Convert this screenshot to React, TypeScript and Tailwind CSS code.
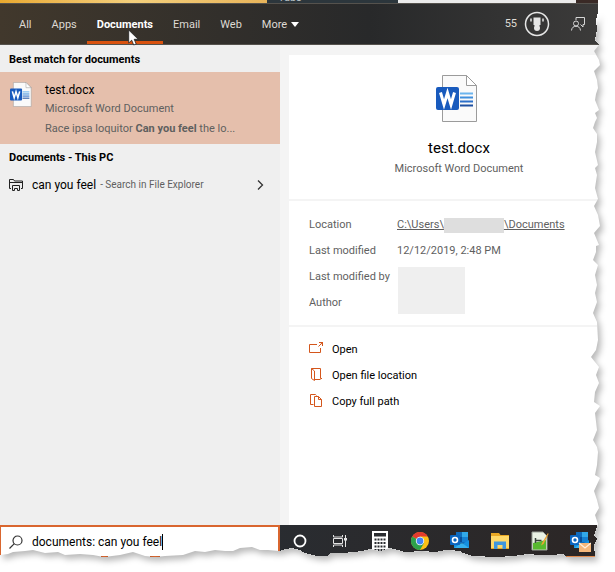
import type { ReactNode } from "react";
import { useState } from "react";

const tabs = ["All", "Apps", "Documents", "Email", "Web"];

// [x, y] points of the torn paper edge, top right to bottom left
const tornEdge = [
  [598, 0], [598, 12], [596, 20], [597, 30], [595, 40], [599, 45], [594, 51], [599, 60], [600, 65], [594, 71],
  [597, 80], [598, 88], [596, 94], [595, 100], [597, 105], [599, 110], [595, 113], [597, 118], [595, 122], [593, 128],
  [597, 134], [597, 142], [595, 152], [598, 165], [595, 168], [597, 175], [595, 188], [598, 199], [594, 206], [598, 215],
  [600, 226], [594, 233], [599, 245], [596, 246], [596, 252], [593, 260], [598, 265], [595, 275], [597, 285], [595, 293],
  [597, 302], [593, 313], [597, 322], [598, 340], [596, 350], [591, 357], [599, 367], [596, 375], [599, 383], [595, 392],
  [594, 402], [600, 406], [595, 413], [597, 430], [593, 440], [597, 447], [598, 452], [597, 465], [595, 475], [600, 478],
  [594, 491], [597, 500], [599, 508], [595, 515], [598, 524], [596, 530], [594, 535], [597, 539], [594, 545], [595, 557],
  [567, 557], [563, 554], [551, 555], [540, 555], [527, 554], [514, 556], [497, 557], [473, 556], [463, 553], [460, 551],
  [450, 550], [445, 550], [435, 552], [422, 551], [405, 552], [398, 550], [390, 548], [380, 551], [370, 549], [362, 551],
  [353, 552], [342, 553], [330, 553], [327, 556], [317, 556], [305, 553], [300, 550], [292, 548], [285, 549], [279, 551],
  [268, 550], [260, 550], [252, 547], [240, 548], [233, 551], [225, 551], [215, 550], [205, 552], [195, 551], [183, 555],
  [165, 556], [155, 557], [145, 556], [133, 552], [120, 555], [104, 557], [93, 555], [80, 554], [65, 555], [58, 552],
  [45, 553], [33, 550], [25, 551], [13, 552], [8, 554], [0, 555],
];

function TornEdge() {
  const points = tornEdge.map((p) => p.join(",")).join(" ");
  const outside = `${points} 0,572 615,572 615,0`;
  return (
    <svg
      className="pointer-events-none absolute inset-0 h-full w-full"
      viewBox="0 0 615 572"
      preserveAspectRatio="none"
      aria-hidden="true"
    >
      <defs>
        <clipPath id="outside">
          <polygon points={outside} />
        </clipPath>
        <filter id="soft" x="-5%" y="-5%" width="110%" height="110%">
          <feGaussianBlur stdDeviation="3" />
        </filter>
      </defs>
      <polygon points={outside} fill="#fff" shapeRendering="crispEdges" />
      <g clipPath="url(#outside)">
        <polygon
          points={`${points} 8,60 8,20 598,20`}
          fill="#000"
          fillOpacity="0.28"
          transform="translate(3 4)"
          filter="url(#soft)"
        />
      </g>
    </svg>
  );
}

function WordIcon({ className }: { className: string }) {
  return (
    <svg viewBox="0 0 42 47" className={className} aria-hidden="true">
      <path d="M6.5.5h24l10 10v36h-34z" fill="#fafafa" stroke="#9b9b9b" />
      <path d="M30.500.5v10h10z" fill="#fff" stroke="#9b9b9b" />
      <path d="M24 18.500h13" stroke="#6cb5ee" strokeWidth="2" />
      <path d="M24 22.500h13" stroke="#3f8fdd" strokeWidth="2" />
      <path d="M24 26.500h13" stroke="#2b6fc9" strokeWidth="2" />
      <path d="M24 30.500h13" stroke="#1d4fa0" strokeWidth="2" />
      <rect y="12" width="23" height="23" rx="2" fill="#185abd" />
      <path d="M4.500 17.500 8 29.500l3.500-11.500L15 29.500l3.500-12" fill="none" stroke="#fff" strokeWidth="3" />
    </svg>
  );
}

function OutlookIcon({ mail = false }: { mail?: boolean }) {
  return (
    <svg viewBox="0 0 22 22" className="size-[22px]" aria-hidden="true">
      <path d="M7 2h12v11H7z" fill="#0f6cbd" />
      <path d="M13 2h6v5h-6z" fill="#32a9e8" />
      <path d="M7 7h6v5H7z" fill="#0a4f97" />
      <path d="M13 7h6v5h-6z" fill="#1681d2" />
      <path d="M5 10l8 4 7-4v8H5z" fill="#1590df" />
      <path d="M5 18l8-5 7 5z" fill="#35b1ee" />
      <rect x="1" y="5" width="10" height="10" rx="1" fill="#0b66c0" />
      <circle cx="6" cy="10" r="2.500" fill="none" stroke="#fff" strokeWidth="1.600" />
      {mail && (
        <>
          <path d="M10 13h12v9H10z" fill="#f6b77a" />
          <path d="M10 13l6 5 6-5" fill="none" stroke="#fff1df" strokeWidth="1.200" />
        </>
      )}
    </svg>
  );
}

function Pinned({ label, running = false, children }: { label: string; running?: boolean; children: ReactNode }) {
  return (
    <button
      type="button"
      aria-label={label}
      className={
        running
          ? "flex h-8 w-10 shrink-0 items-center justify-center border-b border-[#e08a4e]"
          : "flex h-8 w-10 shrink-0 items-center justify-center"
      }
    >
      {children}
    </button>
  );
}

function Action({ label, children }: { label: string; children: ReactNode }) {
  return (
    <button type="button" className="flex h-[26px] w-full items-center gap-2 text-left text-black">
      <svg
        viewBox="0 0 15 15"
        className="mb-1 size-[15px]"
        fill="none"
        stroke="#d4561c"
        aria-hidden="true"
      >
        {children}
      </svg>
      {label}
    </button>
  );
}

export default function App() {
  const [active, setActive] = useState("Documents");
  const [query, setQuery] = useState("documents: can you feel");

  return (
    <div className="relative flex min-h-screen flex-col overflow-hidden bg-white pb-[15px] font-[Roboto,'Open_Sans',sans-serif] text-[11px] leading-4 text-[#5f5f5f]">
      {/* sliver of the window behind */}
      <div className="flex h-[3px] overflow-hidden">
        <div className="w-[267px] bg-linear-to-r from-[#e9a92e] via-[#f3cf7c] to-[#e8b45a]" />
        <div className="flex w-[131px] items-end bg-[#2c363c] pl-[11px] leading-[11px] text-[#b8c0c4]">
          Tabs
        </div>
        <div className="w-[178px] bg-[#ebebeb]" />
        <div className="flex-1 bg-[#3a2a26]" />
      </div>

      <header className="relative flex h-[42px] items-stretch border-y border-[#55524d] bg-linear-to-r from-[#41382c] via-[#28292a] via-60% to-[#3d3c3b] pr-[30px] pl-[9px] text-[#dedad4]">
        <nav className="flex">
          {tabs.map((tab) => (
            <button
              key={tab}
              type="button"
              onClick={() => setActive(tab)}
              className={
                tab === active
                  ? "border-b-3 border-[#d9520f] px-[10px] pt-1 font-bold text-white"
                  : "border-b-3 border-transparent px-[10px] pt-1"
              }
            >
              {tab}
            </button>
          ))}
          <button type="button" className="flex items-center gap-1 px-[10px] pt-px">
            More
            <svg viewBox="0 0 8 5" className="h-[5px] w-2" aria-hidden="true">
              <path d="M0 0h8L4 5z" fill="#fff" />
            </svg>
          </button>
        </nav>
        <div className="ml-auto flex items-center">
          <span>55</span>
          <svg viewBox="0 0 26 26" className="ml-[7px] size-[26px]" aria-hidden="true">
            <circle cx="13" cy="13" r="11.500" fill="none" stroke="#e6e6e6" strokeWidth="1.500" />
            <path d="M9.500 6.500h7v7l-2 2h-3l-2-2z" fill="#e6e6e6" />
            <path d="M7 7.500v3M19 7.500v3" stroke="#e6e6e6" strokeWidth="1.500" />
            <circle cx="13" cy="17" r="3" fill="#e6e6e6" />
          </svg>
          <button type="button" aria-label="Feedback" className="ml-[21px]">
            <svg viewBox="0 0 14 14" className="size-3.5" fill="none" stroke="#d6d6d6" aria-hidden="true">
              <path d="M5 3V.5h8.500v7H12v2.500L9.500 7.500" />
              <circle cx="5" cy="6.500" r="2.500" />
              <path d="M.5 13.500C.8 10.500 2.500 9.300 5 9.300s4.200 1.200 4.500 4.200" />
            </svg>
          </button>
        </div>
        <svg viewBox="0 0 11 18" className="absolute top-[25px] left-32 h-[18px] w-[11px]" aria-hidden="true">
          <path d="M.7 1v13l3-2.800 2 4.800 2.500-1-2-4.700h4z" fill="#fff" stroke="#222" strokeWidth=".8" />
        </svg>
      </header>

      <main className="flex flex-1">
        <section className="w-[280px] shrink-0 bg-[#efefef]">
          <h2 className="flex h-[27px] items-center pt-[2px] pl-[9px] font-bold text-black">
            Best match for documents
          </h2>
          <button type="button" className="flex h-[72px] w-full bg-[#e5bfac] pt-[9px] pl-[10px] text-left">
            <WordIcon className="mt-px h-[25px] w-[22px]" />
            <span className="ml-[13px] flex flex-col">
              <span className="text-[12px] leading-[18px] text-black">test.docx</span>
              <span className="leading-5">Microsoft Word Document</span>
              <span className="leading-5">
                Race ipsa loquitor <b>Can you feel</b> the lo...
              </span>
            </span>
          </button>
          <h2 className="flex h-[26px] items-center pt-[2px] pl-[9px] font-bold text-black">Documents - This PC</h2>
          <button type="button" className="flex h-[30px] w-full items-center pr-4 pl-[9px] text-left">
            <svg viewBox="0 0 14 14" className="h-3.5 w-3.5" fill="none" stroke="#222" aria-hidden="true">
              <path d="M2 10.500H.5v-9h4l1 1.500h8v7.500H12M.5 4.500h13" />
              <path d="M3.500 12.500v-5h7v5h-2v-2h-3v2z" />
            </svg>
            <span className="ml-[9px] text-[12px] text-black">can you feel</span>
            <span className="ml-1 text-[10px]">- Search in File Explorer</span>
            <svg viewBox="0 0 7 10" className="ml-auto h-[10px] w-[7px]" fill="none" stroke="#333" strokeWidth="1.300" aria-hidden="true">
              <path d="M1 .5 5.500 5 1 9.500" />
            </svg>
          </button>
        </section>

        <section className="flex-1 bg-[#f4f4f4] pt-[10px] pl-[9px]">
          <div className="h-full bg-white">
            <div className="flex h-[146px] flex-col items-center border-b-2 border-[#f4f4f4] pt-5 pl-[14px]">
              <WordIcon className="mr-1 h-[47px] w-[42px]" />
              <h1 className="mt-[15px] text-[15px] leading-[22px] text-black">test.docx</h1>
              <p className="mt-[2px]">Microsoft Word Document</p>
            </div>
            <dl className="grid grid-cols-[88px_1fr] auto-rows-[26px] items-center border-b-2 border-[#f4f4f4] pt-[11px] pb-[9px] pl-5">
              <dt>Location</dt>
              <dd className="flex items-center">
                <a href="#location" className="flex items-center underline">
                  C:\Users\
                  <span className="h-[15px] w-[60px] bg-[#dedede]" />
                  \Documents
                </a>
              </dd>
              <dt>Last modified</dt>
              <dd>12/12/2019, 2:48 PM</dd>
              <dt>Last modified by</dt>
              <dd className="row-span-2 ml-px h-[47px] w-[67px] bg-[#efefef]" />
              <dt>Author</dt>
            </dl>
            <div className="pt-[10px] pl-5">
              <Action label="Open">
                <path d="M8 3.500H.5v8h11V7M9.500 5.500l3-3M10 1.500h3.500V5" />
                <path d="M10.500 1h3.500v3.500z" fill="#d4561c" stroke="none" />
              </Action>
              <Action label="Open file location">
                <path d="M2.500 1.500h9v10H13M2.500 1.500v10l3 2V4zM11.500 12.500h-6" />
              </Action>
              <Action label="Copy full path">
                <path d="M4.500 11.500h-3v-10h5l1 1M5.500 3.500h4l3 3v7h-7zM9.500 3.500v3h3" />
              </Action>
            </div>
          </div>
        </section>
      </main>

      <footer className="flex h-8 bg-linear-to-r from-[#26313a] to-[#2c2625]">
        <label className="flex w-[280px] shrink-0 items-center border-2 border-b border-l border-[#d9662f] bg-white pl-2 text-[12px] text-black">
          <svg viewBox="0 0 14 14" className="size-3.5" fill="none" stroke="#333" strokeWidth="1.200" aria-hidden="true">
            <circle cx="8.500" cy="5.500" r="4.500" />
            <path d="M5.300 8.700.5 13.500" />
          </svg>
          <input
            type="text"
            aria-label="Search"
            value={query}
            onChange={(e) => setQuery(e.target.value)}
            className="ml-[9px] field-sizing-content max-w-[240px] outline-none"
          />
          <span className="h-4 w-px bg-black" />
        </label>
        <Pinned label="Cortana">
          <svg viewBox="0 0 14 14" className="size-3.5" aria-hidden="true">
            <circle cx="7" cy="7" r="5.500" fill="none" stroke="#fff" strokeWidth="1.800" />
          </svg>
        </Pinned>
        <Pinned label="Task view">
          <svg viewBox="0 0 14 14" className="size-3.5" fill="none" stroke="#e4e4e4" aria-hidden="true">
            <path d="M.5 1v2h9V1M.5 13v-2h9v2M.5 4.500h9v5h-9zM12.500 1v12" />
            <path d="M11 4h3v2.500h-3z" fill="#e4e4e4" stroke="none" />
          </svg>
        </Pinned>
        <Pinned label="Calculator">
          <svg viewBox="0 0 16 20" className="h-5 w-4" aria-hidden="true">
            <path d="M0 0h16v20H0z" fill="#fff" />
            <path d="M2 2h12v3.500H2z" fill="#2a2c30" />
            <path d="M2.500 8.500h11M2.500 12h11M2.500 15.500h11M2.500 19h11" stroke="#2a2c30" strokeWidth="2" strokeDasharray="2 1" />
          </svg>
        </Pinned>
        <Pinned label="Chrome">
          <svg viewBox="0 0 18 18" className="size-[18px]" aria-hidden="true">
            <circle cx="9" cy="9" r="9" fill="#fbc116" />
            <path d="M9 9 1.200 4.500A9 9 0 0 1 16.800 4.500H9z" fill="#e33b2e" />
            <path d="M1.200 4.500A9 9 0 0 0 9 18l3.900-6.700L9 9z" fill="#2da14c" />
            <circle cx="9" cy="9" r="4.200" fill="#fff" />
            <circle cx="9" cy="9" r="3.400" fill="#4285f4" />
          </svg>
        </Pinned>
        <Pinned label="Outlook">
          <OutlookIcon />
        </Pinned>
        <Pinned label="File Explorer">
          <svg viewBox="0 0 18 16" className="h-4 w-[18px]" aria-hidden="true">
            <path d="M0 0h8l1.500 2H18v14H0z" fill="#e9a825" />
            <path d="M0 3h18v12H0z" fill="#ffd969" />
            <path d="M3 16V8.500h12V16h-3.500v-4h-5v4z" fill="#3f97dd" />
          </svg>
        </Pinned>
        <Pinned label="Notepad++">
          <svg viewBox="0 0 18 20" className="h-5 w-[18px]" aria-hidden="true">
            <path d="M1 1h11l4 4v14H1z" fill="#e9f2e4" stroke="#9aa097" />
            <path d="M2 12 15 9v9.500H2z" fill="#58b92f" />
            <path d="M4.500 7v5M4.500 9.500h6" stroke="#39443a" strokeWidth="1.500" />
            <path d="M17 2 11 12l-1 2.500 2.500-1.500 5-10z" fill="#eda332" />
          </svg>
        </Pinned>
        <Pinned label="Inbox" running>
          <OutlookIcon mail />
        </Pinned>
      </footer>

      <TornEdge />
    </div>
  );
}
